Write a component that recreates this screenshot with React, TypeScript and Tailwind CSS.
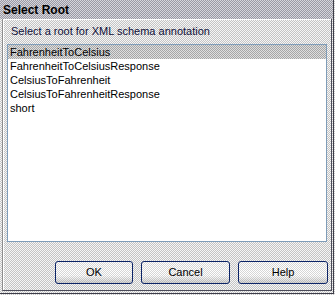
import React from "react";

const roots = [
  "FahrenheitToCelsius",
  "FahrenheitToCelsiusResponse",
  "CelsiusToFahrenheit",
  "CelsiusToFahrenheitResponse",
  "short",
];

function DialogButton({ label, width }: { label: string; width: string }) {
  return (
    <button
      className={`${width} h-[23px] rounded-[3px] border border-[#0c2467] text-[11px] leading-[21px] text-black bg-[image:linear-gradient(to_bottom,transparent_65%,rgba(0,0,0,0.16)),repeating-conic-gradient(#d6d6d6_0%_25%,#ffffff_0%_50%)] bg-[length:100%_100%,2px_2px]`}
    >
      {label}
    </button>
  );
}

export default function App() {
  return (
    <div className="w-[335px] h-[295px] overflow-hidden font-['Liberation_Sans',Arial,sans-serif] bg-[image:repeating-conic-gradient(#c4c4c4_0%_25%,#f6f6f6_0%_50%)] bg-[length:2px_2px]">
      <div className="w-[334px] h-[294px] border-r border-b border-[#3c3c48] flex flex-col">
        {/* title bar */}
        <div className="h-[19px] pl-[3px] text-[12px] font-bold leading-[21px] text-black bg-[image:repeating-conic-gradient(#9a9aa4_0%_25%,#d6d6dc_0%_50%)] bg-[length:2px_2px]">
          Select Root
        </div>

        {/* body */}
        <div className="ml-[2px] w-[330px] h-[272px] border-l border-l-[#8c8c8c] border-r border-r-[#4a4a58] border-b border-b-[#4a4a58]">
          <div className="h-full border-t border-l border-white flex flex-col">
            <div className="pl-[7px] pt-[4px] h-[24px] text-[11px] leading-[14px] text-[#10103a]">
              Select a root for XML schema annotation
            </div>

            <div className="ml-[3px] w-[320px] h-[198px] border border-[#7f9db9] bg-white">
              {roots.map((r, i) => (
                <div
                  key={r}
                  className={`h-[14px] pl-[2px] text-[11px] leading-[14px] text-black ${
                    i === 0
                      ? "bg-[image:repeating-conic-gradient(#a6a6a6_0%_25%,#dedede_0%_50%)] bg-[length:2px_2px]"
                      : ""
                  }`}
                >
                  {r}
                </div>
              ))}
            </div>

            <div className="mt-[19px] w-[324px] flex justify-end gap-[8px]">
              <DialogButton label="OK" width="w-[78px]" />
              <DialogButton label="Cancel" width="w-[89px]" />
              <DialogButton label="Help" width="w-[90px]" />
            </div>
          </div>
        </div>
      </div>
    </div>
  );
}
